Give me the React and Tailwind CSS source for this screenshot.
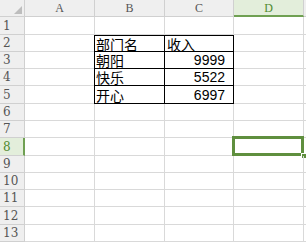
import React from "react";

const colW = [25, 70, 70, 69, 70];
const rowH = [18, 17, 17, 17, 18, 17, 17, 18, 17, 17, 17, 18, 17];
const data = {
  2: ["部门名", "收入"],
  3: ["朝阳", "9999"],
  4: ["快乐", "5522"],
  5: ["开心", "6997"],
};

export default function App() {
  return (
    <div className="w-[306px] h-[244px] bg-white overflow-hidden relative" style={{ fontFamily: "'Liberation Sans', 'Noto Sans CJK SC', sans-serif" }}>
      <div className="flex h-[17px]">
        <div className="w-[25px] h-full bg-[#efefef] border-r border-b border-[#d0d0d0] relative">
          <svg width="8" height="8" className="absolute left-[14px] top-[6px]">
            <polygon points="8,0 8,8 0,8" fill="#bdbdbd" />
          </svg>
        </div>
        {["A", "B", "C"].map((c, i) => (
          <div
            key={c}
            className="h-full bg-[#efefef] border-r border-b border-[#d0d0d0] flex items-center justify-center text-[12px] text-[#555]"
            style={{ width: colW[i + 1] }}
          >
            <span style={{ fontFamily: "'Liberation Serif', serif" }}>{c}</span>
          </div>
        ))}
        <div className="w-[70px] h-full bg-[#e3eedb] border-r border-[#d0d0d0] border-b-2 border-b-[#6fa052] flex items-center justify-center text-[12px] text-[#4f8a2e]">
          <span style={{ fontFamily: "'Liberation Serif', serif" }}>D</span>
        </div>
        <div className="flex-1 h-full bg-[#efefef] border-b border-[#d0d0d0]" />
      </div>
      {rowH.map((h, r) => {
        const row = r + 1;
        const sel = row === 8;
        const d = data[row];
        return (
          <div key={row} className="flex" style={{ height: h }}>
            <div
              className={
                "w-[25px] h-full border-b border-[#d0d0d0] flex items-center pl-[3px] " +
                (sel ? "bg-[#e3eedb] text-[#4f8a2e] border-r-2 border-r-[#6fa052]" : "bg-[#efefef] text-[#555] border-r border-r-[#d0d0d0]")
              }
              style={{ fontFamily: "'DejaVu Serif', serif", fontSize: 12 }}
            >
              {row}
            </div>
            <div className="w-[70px] h-full border-r border-b border-[#d9d9d9]" />
            {d ? (
              <>
                <div
                  className={
                    "h-full border-l border-r border-b border-black flex items-center pl-[1px] text-black leading-[14px]" +
                    (row === 2 ? " border-t" : "")
                  }
                  style={{ fontFamily: "'Noto Sans CJK SC', sans-serif", marginLeft: -1, width: 71, fontSize: 14 }}
                >
                  {d[0]}
                </div>
                <div
                  className={
                    "h-full border-r border-b border-black flex items-center text-black leading-[14px] " +
                    (row === 2 ? "border-t justify-start pl-[2px]" : "justify-end pr-[8px]")
                  }
                  style={{
                    width: 69,
                    fontFamily: row === 2 ? "'Noto Sans CJK SC', sans-serif" : "'Liberation Sans', sans-serif",
                    fontSize: 14,
                  }}
                >
                  {d[1]}
                </div>
              </>
            ) : (
              <>
                <div className="w-[70px] h-full border-r border-b border-[#d9d9d9]" />
                <div className="w-[69px] h-full border-r border-b border-[#d9d9d9]" />
              </>
            )}
            <div className="w-[70px] h-full border-r border-b border-[#d9d9d9] relative">
              {sel && (
                <>
                  <div className="absolute left-[-2px] top-[-2px] w-[72px] h-[20px] border-[3px] border-[#5f8f3e]" />
                  <div className="absolute right-[-4px] bottom-[-4px] w-[6px] h-[6px] bg-[#5f8f3e] border border-white" />
                </>
              )}
            </div>
            <div className="flex-1 h-full border-b border-[#d9d9d9]" />
          </div>
        );
      })}
    </div>
  );
}
